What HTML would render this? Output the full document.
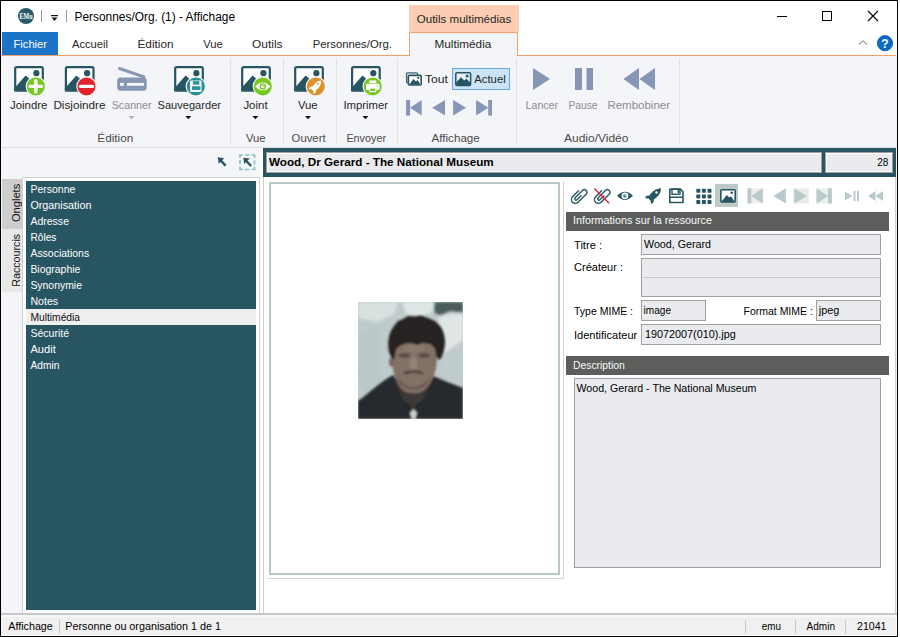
<!DOCTYPE html>
<html><head><meta charset="utf-8">
<style>
html,body{margin:0;padding:0;background:#fff;width:900px;height:637px;overflow:hidden}
svg{display:block}
text{font-family:"Liberation Sans",sans-serif}
.s12{font-size:12px}
.s11{font-size:11px}
</style></head><body>
<svg width="900" height="637" viewBox="0 0 900 637">
<defs>
<g id="frame">
  <rect x="1.1" y="1.1" width="27.6" height="23.2" rx="1.5" fill="#fff" stroke="#275562" stroke-width="2.2"/>
  <circle cx="22.3" cy="7.2" r="3.1" fill="#275562"/>
  <polygon points="0,25.4 0,22.5 11.5,9.5 15.5,13 18,25.4" fill="#275562"/>
</g>
</defs>
<!-- window -->
<rect x="0" y="0" width="898" height="637" fill="#fff"/>
<!-- ribbon body -->
<rect x="1" y="56" width="896" height="91" fill="#f4f5f8"/>
<rect x="2" y="147" width="895" height="1" fill="#dadbdc"/>
<!-- main area bg -->
<rect x="1" y="148" width="896" height="465" fill="#f4f5f8"/>
<!-- window border -->
<rect x="0.5" y="0.5" width="897" height="636" fill="none" stroke="#000" stroke-width="1"/>
<!--TITLEBAR-->
<circle cx="26" cy="16" r="8" fill="#2b5a66"/>
<text x="26" y="19" font-family="Liberation Serif" font-size="8" font-weight="bold" fill="#fff" text-anchor="middle" textLength="13" lengthAdjust="spacingAndGlyphs" style="font-family:'Liberation Serif'">EMu</text>
<rect x="41" y="10" width="1" height="12" fill="#9a9a9a"/>
<rect x="51" y="15" width="7" height="1.2" fill="#111"/>
<polygon points="51.5,17.5 57.5,17.5 54.5,21" fill="#111"/>
<rect x="66" y="10" width="1" height="12" fill="#9a9a9a"/>
<text x="74.5" y="21" font-size="12.5" fill="#000" textLength="160.5" lengthAdjust="spacingAndGlyphs">Personnes/Org. (1) - Affichage</text>
<rect x="777" y="16" width="10" height="1" fill="#000"/>
<rect x="822.5" y="11.5" width="9" height="9" fill="none" stroke="#000" stroke-width="1"/>
<path d="M868 11 L878 21 M878 11 L868 21" stroke="#000" stroke-width="1.1"/>

<!--TABS-->
<rect x="409" y="5" width="110" height="27" fill="#fccdb2"/>
<text class="s11" x="416.7" y="23" fill="#262626" textLength="94.6" lengthAdjust="spacingAndGlyphs">Outils multimédias</text>
<rect x="2" y="32" width="56" height="23" fill="#1b74c8"/>
<text class="s11" x="13.5" y="48" fill="#fff" textLength="33.5" lengthAdjust="spacingAndGlyphs">Fichier</text>
<text class="s11" x="72" y="48" fill="#262626" textLength="36" lengthAdjust="spacingAndGlyphs">Accueil</text>
<text class="s11" x="137.5" y="48" fill="#262626" textLength="36" lengthAdjust="spacingAndGlyphs">Édition</text>
<text class="s11" x="203.3" y="48" fill="#262626" textLength="19.5" lengthAdjust="spacingAndGlyphs">Vue</text>
<text class="s11" x="252" y="48" fill="#262626" textLength="30.5" lengthAdjust="spacingAndGlyphs">Outils</text>
<text class="s11" x="312.7" y="48" fill="#262626" textLength="79.2" lengthAdjust="spacingAndGlyphs">Personnes/Org.</text>
<rect x="2" y="55" width="894" height="1" fill="#f7a068"/>
<path d="M409.5 56 V32.5 H517.5 V56" fill="#f4f5f8" stroke="#f7a068" stroke-width="1"/>
<rect x="410" y="55" width="107" height="2" fill="#f4f5f8"/>
<text class="s11" x="434.5" y="48" fill="#262626" textLength="56.8" lengthAdjust="spacingAndGlyphs">Multimédia</text>
<path d="M859 44.5 L863 40.8 L867 44.5" fill="none" stroke="#a0a0a0" stroke-width="1.1"/>
<circle cx="885" cy="43.2" r="7.6" fill="#0a6cc8" stroke="#0d4f96" stroke-width="0.8"/>
<text x="885" y="47.5" font-size="12" font-weight="bold" fill="#fff" text-anchor="middle">?</text>

<!--RIBBON-->
<g transform="translate(14.1,66)"><use href="#frame"/><circle cx="21.7" cy="20.4" r="9.6" fill="#76c81e" stroke="#f4f5f8" stroke-width="1.2"/><path d="M16 20.4 H27.4 M21.7 14.7 V26.1" stroke="#fff" stroke-width="3.4" stroke-linecap="round"/></g>
<g transform="translate(64.8,66)"><use href="#frame"/><circle cx="21.7" cy="20.4" r="9.6" fill="#e3222a" stroke="#f4f5f8" stroke-width="1.2"/><path d="M15.8 20.4 H27.6" stroke="#fff" stroke-width="3.4" stroke-linecap="round"/></g>
<g transform="translate(174.1,66)"><use href="#frame"/><circle cx="21.7" cy="20.4" r="9.6" fill="#2a8f94" stroke="#f4f5f8" stroke-width="1.2"/><rect x="15.9" y="14.4" width="11.6" height="11.6" rx="1.3" fill="#f4f5f8"/><rect x="18.8" y="15.2" width="6.4" height="3.4" fill="#2a8f94"/><rect x="17.9" y="20.3" width="8.4" height="3.6" fill="#2a8f94"/></g>
<g transform="translate(241.1,66)"><use href="#frame"/><circle cx="21.7" cy="20.4" r="9.6" fill="#76c81e" stroke="#f4f5f8" stroke-width="1.2"/><path d="M14 20.4 Q21.7 12.5 29.4 20.4 Q21.7 28.3 14 20.4 Z" fill="#fff"/><circle cx="21.7" cy="20.4" r="3.2" fill="#76c81e"/><circle cx="21.7" cy="20.4" r="1.8" fill="#fff"/><path d="M21.7 18.6 V20.4 H23.4" stroke="#76c81e" stroke-width="0.8" fill="none"/></g>
<g transform="translate(294.1,66)"><use href="#frame"/><circle cx="21.7" cy="20.4" r="9.6" fill="#e0902a" stroke="#f4f5f8" stroke-width="1.2"/><path d="M27 14.5 C23.5 14.8 20.5 17 18.5 20.5 L16 20.8 L14.5 23 L17.5 23.2 L19.3 25.2 L19.5 28 L21.7 26.6 L22 24 C25.5 22 27.2 18.5 27 14.5 Z" fill="#fff"/><circle cx="23.6" cy="17.8" r="1" fill="#e0902a"/></g>
<g transform="translate(351,66)"><use href="#frame"/><circle cx="21.7" cy="20.4" r="9.6" fill="#76c81e" stroke="#f4f5f8" stroke-width="1.2"/><rect x="18.3" y="14.4" width="7" height="2.8" fill="#fff"/><rect x="15" y="17.8" width="13.6" height="6.2" rx="1" fill="#fff"/><rect x="18.3" y="22" width="7" height="4.2" fill="#fff"/><rect x="19.3" y="22.6" width="5" height="2.4" fill="#76c81e"/><circle cx="26.2" cy="19.6" r="0.6" fill="#76c81e"/></g>
<path d="M119.5 68.5 L144 76.8" stroke="#8796b5" stroke-width="3" stroke-linecap="round"/><rect x="117.2" y="77.6" width="29.5" height="13.2" rx="3.2" fill="#8796b5"/><rect x="120" y="82.9" width="3.8" height="2.9" fill="#f4f5f8"/><rect x="127" y="82.9" width="17" height="2.9" fill="#f4f5f8"/><text class="s11" x="10" y="109" fill="#262626" textLength="37.4" lengthAdjust="spacingAndGlyphs">Joindre</text>
<text class="s11" x="53.4" y="109" fill="#262626" textLength="52.1" lengthAdjust="spacingAndGlyphs">Disjoindre</text>
<text class="s11" x="111.7" y="109" fill="#8d8d8d" textLength="39.9" lengthAdjust="spacingAndGlyphs">Scanner</text>
<text class="s11" x="157.5" y="109" fill="#262626" textLength="63.5" lengthAdjust="spacingAndGlyphs">Sauvegarder</text>
<text class="s11" x="243.4" y="109" fill="#262626" textLength="24.2" lengthAdjust="spacingAndGlyphs">Joint</text>
<text class="s11" x="298" y="109" fill="#262626" textLength="19.6" lengthAdjust="spacingAndGlyphs">Vue</text>
<text class="s11" x="343.4" y="109" fill="#262626" textLength="44.6" lengthAdjust="spacingAndGlyphs">Imprimer</text>
<text class="s11" x="525.6" y="109" fill="#8d8d8d" textLength="32.4" lengthAdjust="spacingAndGlyphs">Lancer</text>
<text class="s11" x="568.4" y="109" fill="#8d8d8d" textLength="29.2" lengthAdjust="spacingAndGlyphs">Pause</text>
<text class="s11" x="607.4" y="109" fill="#8d8d8d" textLength="62.6" lengthAdjust="spacingAndGlyphs">Rembobiner</text>
<polygon points="128.6,116 134.6,116 131.6,119.2" fill="#b0b0b0"/>
<polygon points="185.3,116 191.3,116 188.3,119.2" fill="#111"/>
<polygon points="252.4,116 258.4,116 255.4,119.2" fill="#111"/>
<polygon points="305,116 311,116 308,119.2" fill="#111"/>
<polygon points="362.4,116 368.4,116 365.4,119.2" fill="#111"/>
<text class="s11" x="97.3" y="142" fill="#4a4a4a" textLength="36" lengthAdjust="spacingAndGlyphs">Édition</text>
<text class="s11" x="246" y="142" fill="#4a4a4a" textLength="19.6" lengthAdjust="spacingAndGlyphs">Vue</text>
<text class="s11" x="291.6" y="142" fill="#4a4a4a" textLength="34" lengthAdjust="spacingAndGlyphs">Ouvert</text>
<text class="s11" x="346.4" y="142" fill="#4a4a4a" textLength="39.6" lengthAdjust="spacingAndGlyphs">Envoyer</text>
<text class="s11" x="431.5" y="142" fill="#4a4a4a" textLength="48.3" lengthAdjust="spacingAndGlyphs">Affichage</text>
<text class="s11" x="564" y="142" fill="#4a4a4a" textLength="64.4" lengthAdjust="spacingAndGlyphs">Audio/Vidéo</text>
<rect x="230" y="58" width="1" height="86" fill="#e1e2e4"/>
<rect x="283" y="58" width="1" height="86" fill="#e1e2e4"/>
<rect x="336" y="58" width="1" height="86" fill="#e1e2e4"/>
<rect x="397" y="58" width="1" height="86" fill="#e1e2e4"/>
<rect x="516" y="58" width="1" height="86" fill="#e1e2e4"/>
<rect x="679" y="58" width="1" height="86" fill="#e1e2e4"/>
<rect x="452.5" y="68.5" width="57" height="21" fill="#cce4f7" stroke="#69a7e3" stroke-width="1"/>
<rect x="406.6" y="72.8" width="11" height="10" rx="1" fill="#f4f5f8" stroke="#275562" stroke-width="1.3" opacity="0.9"/><rect x="408.4" y="75.4" width="12.8" height="9.6" rx="1" fill="#fff" stroke="#275562" stroke-width="1.6"/><polygon points="409.2,84.5 413.5,79 416,81.5 417.5,80 420.5,84.5" fill="#275562"/><circle cx="418.2" cy="77.8" r="1.1" fill="#275562"/>
<text class="s11" x="425" y="83" fill="#262626" textLength="23" lengthAdjust="spacingAndGlyphs">Tout</text>
<rect x="455.8" y="72.7" width="14.8" height="12.8" rx="1.2" fill="#e4eff9" stroke="#275562" stroke-width="1.5"/><polygon points="456.3,85.2 456.3,82.3 461,77.2 464.2,80.4 466.3,78.8 470.8,83 470.8,85.2" fill="#275562"/><circle cx="467.1" cy="75.9" r="1.5" fill="#275562"/>
<text class="s11" x="474.3" y="83" fill="#262626" textLength="31.4" lengthAdjust="spacingAndGlyphs">Actuel</text>
<rect x="406.1" y="100" width="4" height="15.6" fill="#8796b5"/><polygon points="410,107.8 421.7,100 421.7,115.6" fill="#8796b5"/><polygon points="432.2,107.8 445,100 445,115.6" fill="#8796b5"/><polygon points="466.1,107.8 453.1,100 453.1,115.6" fill="#8796b5"/><polygon points="488.4,107.8 476.1,100 476.1,115.6" fill="#8796b5"/><rect x="488.2" y="100" width="3.8" height="15.6" fill="#8796b5"/>
<polygon points="533,68 550,79 533,90" fill="#8796b5"/><rect x="575" y="68" width="7" height="22" fill="#8796b5"/><rect x="586.5" y="68" width="6.5" height="22" fill="#8796b5"/><polygon points="623.4,79 639,68 639,90" fill="#8796b5"/><polygon points="639.4,79 655,68 655,90" fill="#8796b5"/>

<!--LEFT-->
<path d="M217.8 157.3 L224.2 158.2 L218.7 163.7 Z" fill="#275562"/><path d="M220.6 160.4 L225.6 165.6" stroke="#275562" stroke-width="2.3"/>
<rect x="240" y="155" width="14.5" height="14.5" fill="none" stroke="#8ac0c2" stroke-width="1.7" stroke-dasharray="5.6 2.4 4.2 2.3" stroke-dashoffset="2.8"/>
<path d="M243.3 157.7 L249.7 158.6 L244.2 164.1 Z" fill="#275562"/><path d="M246.1 160.8 L251.1 166" stroke="#275562" stroke-width="2.3"/>
<rect x="2" y="179" width="20" height="50" fill="#cdcdcd"/><rect x="2" y="229" width="20" height="63" fill="#e8e8e8"/>
<text class="s11" transform="translate(19.5,222) rotate(-90)" fill="#111" textLength="38.2" lengthAdjust="spacingAndGlyphs">Onglets</text>
<text class="s11" transform="translate(19.5,286.8) rotate(-90)" fill="#111" textLength="53" lengthAdjust="spacingAndGlyphs">Raccourcis</text>
<rect x="22" y="177" width="238" height="437" fill="#fff"/><path d="M22.5 614 V177.5 H259.5 V614" fill="none" stroke="#d0d0d0" stroke-width="1"/>
<rect x="26" y="181" width="230" height="429" fill="#275562"/>
<rect x="26" y="309" width="230" height="16" fill="#efefef"/>
<text class="s11" x="30.4" y="192.6" fill="#fff" textLength="45" lengthAdjust="spacingAndGlyphs">Personne</text>
<text class="s11" x="30.4" y="208.6" fill="#fff" textLength="61" lengthAdjust="spacingAndGlyphs">Organisation</text>
<text class="s11" x="30.4" y="224.6" fill="#fff" textLength="38.6" lengthAdjust="spacingAndGlyphs">Adresse</text>
<text class="s11" x="30.4" y="240.6" fill="#fff" textLength="26" lengthAdjust="spacingAndGlyphs">Rôles</text>
<text class="s11" x="30.4" y="256.6" fill="#fff" textLength="58.8" lengthAdjust="spacingAndGlyphs">Associations</text>
<text class="s11" x="30.4" y="272.6" fill="#fff" textLength="50" lengthAdjust="spacingAndGlyphs">Biographie</text>
<text class="s11" x="30.4" y="288.6" fill="#fff" textLength="51.6" lengthAdjust="spacingAndGlyphs">Synonymie</text>
<text class="s11" x="30.4" y="304.6" fill="#fff" textLength="27.8" lengthAdjust="spacingAndGlyphs">Notes</text>
<text class="s11" x="30.4" y="320.6" fill="#111" textLength="49.7" lengthAdjust="spacingAndGlyphs">Multimédia</text>
<text class="s11" x="30.4" y="336.6" fill="#fff" textLength="38.8" lengthAdjust="spacingAndGlyphs">Sécurité</text>
<text class="s11" x="30.4" y="352.6" fill="#fff" textLength="25.4" lengthAdjust="spacingAndGlyphs">Audit</text>
<text class="s11" x="30.4" y="368.6" fill="#fff" textLength="29" lengthAdjust="spacingAndGlyphs">Admin</text>

<!--CONTENT-->
<rect x="263" y="177" width="633" height="437" fill="#fff"/><rect x="263" y="177" width="1" height="437" fill="#d0d0d0"/><rect x="895" y="177" width="1" height="437" fill="#d0d0d0"/>
<rect x="263" y="148" width="633" height="29" fill="#275562"/>
<rect x="266" y="152" width="556" height="21" fill="#a39e99"/><rect x="267" y="153" width="554" height="19" fill="#fff"/><rect x="268" y="154" width="553" height="17" fill="#e9ebee"/>
<rect x="825" y="152" width="68" height="21" fill="#a39e99"/><rect x="826" y="153" width="66" height="19" fill="#fff"/><rect x="827" y="154" width="65" height="17" fill="#e9ebee"/>
<text class="s11" x="269" y="165.7" font-weight="bold" fill="#000" textLength="224.7" lengthAdjust="spacingAndGlyphs">Wood, Dr Gerard - The National Museum</text>
<text class="s11" x="877.2" y="165.7" fill="#000" textLength="11.1" lengthAdjust="spacingAndGlyphs">28</text>
<rect x="260" y="148" width="3" height="465" fill="#fff"/><rect x="267" y="578" width="297" height="1" fill="#d4d4d4"/><rect x="563" y="181" width="1" height="398" fill="#d4d4d4"/>
<rect x="270" y="183" width="289" height="391" fill="#fff" stroke="#b9c9c4" stroke-width="2"/>
<!--PHOTO-->
<defs>
<clipPath id="pc"><rect x="0" y="0" width="105" height="117"/></clipPath>
<filter id="bl" x="-10%" y="-10%" width="120%" height="120%"><feGaussianBlur stdDeviation="1.6"/></filter>
<filter id="bl2" x="-10%" y="-10%" width="120%" height="120%"><feGaussianBlur stdDeviation="0.9"/></filter>
<linearGradient id="bgg" x1="0" y1="0" x2="0" y2="1"><stop offset="0" stop-color="#cfd8d8"/><stop offset="1" stop-color="#b4c0c0"/></linearGradient>
</defs>
<g transform="translate(358,302)" clip-path="url(#pc)">
<rect x="0" y="0" width="105" height="117" fill="#bfcbcb"/>
<g filter="url(#bl)">
<path d="M0 0 L40 0 L36 12 L20 20 L0 16 Z" fill="#d9e0e0"/>
<path d="M2 30 L20 26 L24 80 L8 100 L0 70 Z" fill="#bcc8c8"/>
<path d="M44 0 L77 0 L74 10 L64 14 L48 12 Z" fill="#dfe6e6"/>
<path d="M76 0 L105 0 L105 11 L92 9 L82 14 L76 10 Z" fill="#4b5b5b"/>
<path d="M80 14 L105 11 L105 88 L94 86 L84 60 Z" fill="#e0e6e6"/>
<path d="M80 56 L105 38 L105 90 L90 86 Z" fill="#c0cbcb"/>
</g>
<g filter="url(#bl2)">
<path d="M0 99 C10 92 22 80 35 73 L42 82 L55 106 L68 82 L73 73 C84 78 95 82 105 86 L105 117 L0 117 Z" fill="#272b2d"/>
<path d="M37 80 L73 80 L66 96 L55 106 L44 96 Z" fill="#3e3836"/>
<path d="M34 55 C34 44 42 39 56 39 C70 39 79 44 79 55 C79 70 74 82 65 89 C60 92 51 92 46 89 C38 82 34 70 34 55 Z" fill="#837166"/>
<ellipse cx="33.5" cy="60" rx="2.5" ry="4.5" fill="#7a685e"/>
<ellipse cx="57" cy="46" rx="11" ry="3.5" fill="#8c7a70"/>
<ellipse cx="55.5" cy="62" rx="4" ry="7" fill="#94827a"/>
<path d="M38 72 C41 92 70 92 73 72 C69 80 62 85 55.5 85 C49 85 42 80 38 72 Z" fill="#56484330"/><path d="M40 76 C43 91 68 91 71 76 C67 82 62 86 55.5 86 C49 86 44 82 40 76 Z" fill="#5a4c46"/>
<path d="M46 71.5 C52 69 59 69 65 71.5" stroke="#4a3e38" stroke-width="2.6" fill="none"/>
<path d="M31 50 C29 40 31 30 36 24 L40 19 L45 17 L50 14 L57 14.5 L63 13.5 L70 16 L77 19 L83 25 C87 32 88 40 86 48 C85 53 83 57 81 58 L78 54 C78 48 76 44 71 42 L65 41 L59 43 L53 41 C46 41 40 44 38 48 L36 58 C33 56 32 53 31 50 Z" fill="#282420"/>
<ellipse cx="46.5" cy="53.5" rx="6" ry="2.4" fill="#5c4c45"/><ellipse cx="66" cy="53.5" rx="6" ry="2.4" fill="#5c4c45"/>
<path d="M52 111 L55.5 107 L59 111 L57 117 L54 117 Z" fill="#d0d0cc"/>
</g>
</g>
<!--RTOOLBAR-->
<rect x="715" y="184" width="23" height="23" fill="#bccbc8"/>
<rect x="747.5" y="188.3" width="15.5" height="15.2" fill="#eeeeee"/><rect x="793.3" y="188.3" width="15.5" height="15.2" fill="#eaeaea"/><rect x="816.3" y="188.3" width="15.5" height="15.2" fill="#eeeeee"/>
<g transform="translate(579,195.8) rotate(45) scale(1)"><path d="M1.3 -1.5 V4.2 A1.3 1.3 0 0 1 -1.3 4.2 V-6.2 A2.6 2.6 0 0 1 3.9 -6.2 V5.2 A3.9 3.9 0 0 1 -3.9 5.2 V-3.2" fill="none" stroke="#275562" stroke-width="1.4" stroke-linecap="round"/></g><g transform="translate(602,195.8) rotate(45) scale(1)"><path d="M1.3 -1.5 V4.2 A1.3 1.3 0 0 1 -1.3 4.2 V-6.2 A2.6 2.6 0 0 1 3.9 -6.2 V5.2 A3.9 3.9 0 0 1 -3.9 5.2 V-3.2" fill="none" stroke="#275562" stroke-width="1.4" stroke-linecap="round"/></g>
<path d="M594.4 188.4 L609.1 203.2" stroke="#e0233a" stroke-width="1.4"/>
<path d="M617 195.8 Q625 187.5 633 195.8 Q625 204.1 617 195.8 Z" fill="#275562"/><circle cx="625" cy="195.8" r="3.4" fill="#fff"/><circle cx="625" cy="195.8" r="1.8" fill="#275562"/><path d="M625 193.6 V195.8 H627" stroke="#fff" stroke-width="0.9" fill="none"/>
<path d="M661 188.2 C656 188.4 652 191.5 649.5 195.5 L646.5 195.8 L645 198.2 L648.5 198.6 L650.8 201 L651 204 L653.4 202.4 L653.8 199.4 C658 197 661 193 661 188.2 Z" fill="#275562"/><circle cx="656.5" cy="192.5" r="1.2" fill="#fff"/>
<path d="M669.8 189.2 H680.5 L683 191.7 V202.5 H669.8 Z" fill="none" stroke="#275562" stroke-width="1.6" stroke-linejoin="round"/><rect x="672" y="189" width="8" height="5.2" fill="none" stroke="#275562" stroke-width="1.4"/><rect x="677.6" y="190" width="1.6" height="3" fill="#275562"/><rect x="669.8" y="196.5" width="13" height="1.5" fill="#275562"/>
<rect x="696.3" y="188.8" width="4" height="4" rx="0.8" fill="#275562"/><rect x="696.3" y="194.4" width="4" height="4" rx="0.8" fill="#275562"/><rect x="696.3" y="200.0" width="4" height="4" rx="0.8" fill="#275562"/><rect x="701.9" y="188.8" width="4" height="4" rx="0.8" fill="#275562"/><rect x="701.9" y="194.4" width="4" height="4" rx="0.8" fill="#275562"/><rect x="701.9" y="200.0" width="4" height="4" rx="0.8" fill="#275562"/><rect x="707.5" y="188.8" width="4" height="4" rx="0.8" fill="#275562"/><rect x="707.5" y="194.4" width="4" height="4" rx="0.8" fill="#275562"/><rect x="707.5" y="200.0" width="4" height="4" rx="0.8" fill="#275562"/>
<rect x="720.8" y="189.7" width="14.4" height="12.2" rx="1" fill="#fff" stroke="#275562" stroke-width="1.6"/><polygon points="721.5,201.6 726.8,195 729.3,197.5 731,196.2 734.5,201.6" fill="#275562"/><circle cx="731.8" cy="192.8" r="1.3" fill="#275562"/>
<rect x="747.5" y="188.3" width="3.8" height="15.2" fill="#b9c9cc"/><polygon points="751,195.9 762.8,188.3 762.8,203.5" fill="#b9c9cc"/><polygon points="773.3,195.9 785.8,188.3 785.8,203.5" fill="#b9c9cc"/><polygon points="806.8,195.9 794.3,188.3 794.3,203.5" fill="#b9c9cc"/><polygon points="828.2,195.9 816.5,188.3 816.5,203.5" fill="#b9c9cc"/><rect x="828" y="188.3" width="3.8" height="15.2" fill="#b9c9cc"/>
<polygon points="845,191.5 852.5,196 845,200.5" fill="#b9c9cc"/><rect x="853.5" y="191" width="2" height="10" fill="#b9c9cc"/><rect x="857" y="191" width="2" height="10" fill="#b9c9cc"/><polygon points="868,196 875.5,191 875.5,201" fill="#b9c9cc"/><polygon points="875.5,196 883,191 883,201" fill="#b9c9cc"/>
<rect x="566" y="212" width="323" height="19" fill="#5b5e5b"/><text class="s11" x="573" y="224.4" fill="#fafafa" textLength="139" lengthAdjust="spacingAndGlyphs">Informations sur la ressource</text>
<rect x="641.5" y="234.5" width="239" height="20" fill="#e9ebee" stroke="#a0a0a0" stroke-width="1"/>
<text class="s11" x="574" y="249" fill="#000" textLength="28" lengthAdjust="spacingAndGlyphs">Titre :</text>
<text class="s11" x="644" y="247.6" fill="#000" textLength="67" lengthAdjust="spacingAndGlyphs">Wood, Gerard</text>
<rect x="641.5" y="258.5" width="239" height="38" fill="#e9ebee" stroke="#a0a0a0" stroke-width="1"/><rect x="642" y="277" width="238" height="1" fill="#c8c8c8"/>
<text class="s11" x="574" y="271" fill="#000" textLength="49" lengthAdjust="spacingAndGlyphs">Créateur :</text>
<rect x="641.5" y="300.5" width="64" height="20" fill="#e9ebee" stroke="#a0a0a0" stroke-width="1"/><rect x="816.5" y="300.5" width="64" height="20" fill="#e9ebee" stroke="#a0a0a0" stroke-width="1"/>
<text class="s11" x="574" y="314.7" fill="#000" textLength="59" lengthAdjust="spacingAndGlyphs">Type MIME :</text>
<text class="s11" x="643.6" y="314" fill="#000" textLength="27.4" lengthAdjust="spacingAndGlyphs">image</text>
<text class="s11" x="743.6" y="314.7" fill="#000" textLength="69.2" lengthAdjust="spacingAndGlyphs">Format MIME :</text>
<text class="s11" x="818.8" y="314" fill="#000" textLength="20.5" lengthAdjust="spacingAndGlyphs">jpeg</text>
<rect x="641.5" y="324.5" width="239" height="20" fill="#e9ebee" stroke="#a0a0a0" stroke-width="1"/>
<text class="s11" x="574" y="339" fill="#000" textLength="63.2" lengthAdjust="spacingAndGlyphs">Identificateur</text>
<text class="s11" x="645" y="338" fill="#000" textLength="90.7" lengthAdjust="spacingAndGlyphs">19072007(010).jpg</text>
<rect x="566" y="356" width="323" height="19" fill="#5b5e5b"/><text class="s11" x="573" y="369" fill="#fafafa" textLength="51.8" lengthAdjust="spacingAndGlyphs">Description</text>
<rect x="574.5" y="378.5" width="306" height="189" fill="#e9ebee" stroke="#a0a0a0" stroke-width="1"/>
<text class="s11" x="576.5" y="391.6" fill="#000" textLength="180" lengthAdjust="spacingAndGlyphs">Wood, Gerard - The National Museum</text>

<!--STATUS-->
<rect x="1" y="613" width="896" height="2" fill="#c8c8c8"/><rect x="1" y="615" width="896" height="2" fill="#f8f8f8"/><rect x="1" y="617" width="895" height="18" fill="#f0f0f0"/>
<rect x="59" y="620" width="1" height="14" fill="#c8c8c8"/><rect x="745" y="620" width="1" height="14" fill="#c8c8c8"/><rect x="795" y="620" width="1" height="14" fill="#c8c8c8"/><rect x="845" y="620" width="1" height="14" fill="#c8c8c8"/>
<text class="s11" x="8.3" y="629.6" fill="#000" textLength="44.5" lengthAdjust="spacingAndGlyphs">Affichage</text>
<text class="s11" x="65.3" y="629.6" fill="#000" textLength="155.7" lengthAdjust="spacingAndGlyphs">Personne ou organisation 1 de 1</text>
<text class="s11" x="761.8" y="629.6" fill="#000" textLength="19.2" lengthAdjust="spacingAndGlyphs">emu</text>
<text class="s11" x="806.6" y="629.6" fill="#000" textLength="28.4" lengthAdjust="spacingAndGlyphs">Admin</text>
<text class="s11" x="857" y="629.6" fill="#000" textLength="29.5" lengthAdjust="spacingAndGlyphs">21041</text>

</svg>
</body></html>
